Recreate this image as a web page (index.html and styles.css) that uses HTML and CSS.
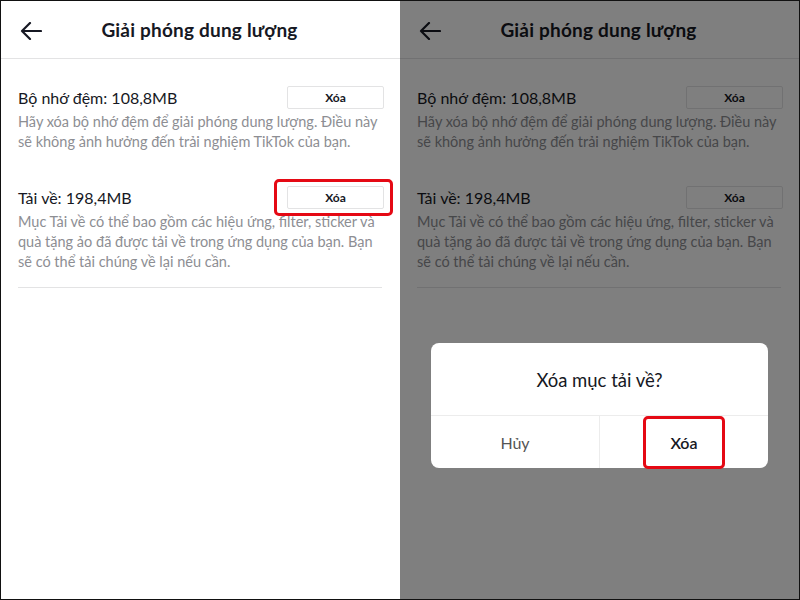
FILE: index.html
```html
<!DOCTYPE html>
<html lang="vi">
<head>
<meta charset="utf-8">
<title>Giải phóng dung lượng</title>
<link rel="stylesheet" href="styles.css">
</head>
<body>
<div class="frame">
  <div class="panel">
    <div class="header">
      <svg class="back" width="22" height="18" viewBox="0 0 22 18"><path d="M21 9H2M10 1L2 9l8 8" fill="none" stroke="#161823" stroke-width="2.2" stroke-linecap="round" stroke-linejoin="round"/></svg>
      <div class="title">Giải phóng dung lượng</div>
    </div>
    <div class="content">
      <div class="item first">
        <div class="row"><span class="label">Bộ nhớ đệm: 108,8MB</span><span class="btn">Xóa</span></div>
        <p class="desc">Hãy xóa bộ nhớ đệm để giải phóng dung lượng. Điều này sẽ không ảnh hưởng đến trải nghiệm TikTok của bạn.</p>
      </div>
      <div class="item second">
        <div class="row"><span class="label">Tải về: 198,4MB</span><span class="btn">Xóa<span class="mark mark-btn"></span></span></div>
        <p class="desc">Mục Tải về có thể bao gồm các hiệu ứng, filter, sticker và quà tặng ảo đã được tải về trong ứng dụng của bạn. Bạn sẽ có thể tải chúng về lại nếu cần.</p>
      </div>
      <div class="divider"></div>
    </div>
  </div>
  <div class="panel dimmed">
    <div class="header">
      <svg class="back" width="22" height="18" viewBox="0 0 22 18"><path d="M21 9H2M10 1L2 9l8 8" fill="none" stroke="#161823" stroke-width="2.2" stroke-linecap="round" stroke-linejoin="round"/></svg>
      <div class="title">Giải phóng dung lượng</div>
    </div>
    <div class="content">
      <div class="item first">
        <div class="row"><span class="label">Bộ nhớ đệm: 108,8MB</span><span class="btn">Xóa</span></div>
        <p class="desc">Hãy xóa bộ nhớ đệm để giải phóng dung lượng. Điều này sẽ không ảnh hưởng đến trải nghiệm TikTok của bạn.</p>
      </div>
      <div class="item second">
        <div class="row"><span class="label">Tải về: 198,4MB</span><span class="btn">Xóa</span></div>
        <p class="desc">Mục Tải về có thể bao gồm các hiệu ứng, filter, sticker và quà tặng ảo đã được tải về trong ứng dụng của bạn. Bạn sẽ có thể tải chúng về lại nếu cần.</p>
      </div>
      <div class="divider"></div>
    </div>
    <div class="overlay"></div>
    <div class="dialog">
      <div class="dialog-title">Xóa mục tải về?</div>
      <div class="dialog-actions">
        <div class="action cancel">Hủy</div>
        <div class="action confirm"><span class="confirm-text">Xóa<span class="mark mark-dialog"></span></span></div>
      </div>
    </div>
  </div>
</div>
</body>
</html>
```

FILE: styles.css
```css
* { box-sizing: border-box; }
html, body { margin: 0; padding: 0; }
body {
  width: 800px;
  height: 600px;
  font-family: "Lato", "Noto Sans", sans-serif;
  color: #161823;
  background: #fff;
}
.frame {
  width: 800px;
  height: 600px;
  border: 1px solid #111;
  display: flex;
  overflow: hidden;
}
.panel {
  position: relative;
  flex: 0 0 399px;
  height: 100%;
  background: #fff;
}
.panel.dimmed { flex: 1 1 auto; }
.header {
  height: 58px;
  border-bottom: 1px solid #e3e3e4;
  display: flex;
  align-items: center;
  position: relative;
}
.back {
  position: absolute;
  left: 19px;
  top: 21px;
}
.title {
  flex: 1;
  text-align: center;
  font-size: 19px;
  font-weight: 700;
  letter-spacing: 0.2px;
  padding-right: 2px;
}
.content {
  padding: 0 17px;
}
.item.first { padding-top: 27px; }
.item.second { padding-top: 34px; }
.row {
  display: flex;
  align-items: center;
  justify-content: space-between;
  height: 23px;
}
.label {
  font-size: 16px;
  color: #161823;
}
.btn {
  position: relative;
  width: 97px;
  height: 23px;
  border: 1px solid #e3e3e4;
  border-radius: 2px;
  display: flex;
  align-items: center;
  justify-content: center;
  font-size: 12px;
  font-weight: 700;
  color: #161823;
  margin-right: -1px;
}
.desc {
  margin: 3px 0 0;
  font-size: 14.5px;
  line-height: 20px;
  color: #8d8e93;
  padding-right: 2px;
}
.divider {
  height: 1px;
  background: #e3e3e4;
  margin-top: 15px;
  margin-right: 1px;
}
.mark {
  position: absolute;
  border: 3px solid #e50914;
  border-radius: 5px;
}
.mark-btn {
  left: -14px;
  right: -10px;
  top: -8px;
  bottom: -8px;
}
.overlay {
  position: absolute;
  inset: 0;
  background: rgba(0, 0, 0, 0.5);
}
.dialog {
  position: absolute;
  left: 31px;
  top: 342px;
  width: 337px;
  height: 125px;
  background: #fff;
  border-radius: 8px;
  display: flex;
  flex-direction: column;
}
.dialog-title {
  height: 73px;
  display: flex;
  align-items: center;
  justify-content: center;
  font-size: 18.5px;
  border-bottom: 1px solid #ececec;
  padding-top: 2px;
}
.dialog-actions {
  flex: 1;
  display: flex;
}
.action {
  flex: 1;
  display: flex;
  align-items: center;
  justify-content: center;
  font-size: 16px;
}
.cancel {
  color: #555;
  border-right: 1px solid #ececec;
}
.confirm { font-weight: 600; color: #161823; }
.confirm-text { position: relative; }
.mark-dialog {
  left: -27px;
  right: -27px;
  top: -17px;
  bottom: -17px;
}
```
